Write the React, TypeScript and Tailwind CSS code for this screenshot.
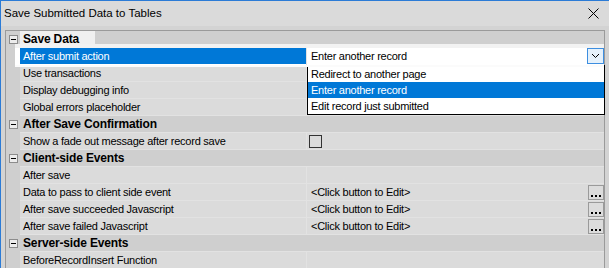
import React from 'react'

type Row =
  | { kind: 'cat'; label: string; focused?: boolean }
  | { kind: 'prop'; label: string; value?: 'none' | 'edit' | 'check' | 'select'; selected?: boolean }

const rows: Row[] = [
  { kind: 'cat', label: 'Save Data', focused: true },
  { kind: 'prop', label: 'After submit action', value: 'select', selected: true },
  { kind: 'prop', label: 'Use transactions' },
  { kind: 'prop', label: 'Display debugging info' },
  { kind: 'prop', label: 'Global errors placeholder' },
  { kind: 'cat', label: 'After Save Confirmation' },
  { kind: 'prop', label: 'Show a fade out message after record save', value: 'check' },
  { kind: 'cat', label: 'Client-side Events' },
  { kind: 'prop', label: 'After save' },
  { kind: 'prop', label: 'Data to pass to client side event', value: 'edit' },
  { kind: 'prop', label: 'After save succeeded Javascript', value: 'edit' },
  { kind: 'prop', label: 'After save failed Javascript', value: 'edit' },
  { kind: 'cat', label: 'Server-side Events' },
  { kind: 'prop', label: 'BeforeRecordInsert Function' },
]

const options = ['Redirect to another page', 'Enter another record', 'Edit record just submitted']

const MinusBox = () => (
  <div className="w-[9px] h-[9px] border border-[#8c8c8c] bg-[#ececec] flex items-center justify-center">
    <div className="w-[5px] h-px bg-black" />
  </div>
)

const EllipsisButton = () => (
  <div className="mt-px mr-0 w-[16px] h-[15px] border border-[#9a9a9a] bg-[#dcdcdc] flex items-end justify-center gap-[2px] pb-[2px]">
    <div className="w-[2px] h-[2px] bg-black" />
    <div className="w-[2px] h-[2px] bg-black" />
    <div className="w-[2px] h-[2px] bg-black" />
  </div>
)

const CategoryRow = ({ label, focused }: { label: string; focused?: boolean }) => (
  <div className="flex h-[17px] bg-[#cfcfcf]">
    <div className="w-[14px] shrink-0 flex items-center pl-[3px]">
      <MinusBox />
    </div>
    <div className="flex-1 border-b border-[#e2e2e2] flex">
      <span
        className={
          'h-full pl-[3px] flex items-center text-[12px] font-bold tracking-[-0.15px] text-black ' +
          (focused ? 'bg-[#f0f0f0] pr-[16px]' : '')
        }
      >
        {label}
      </span>
    </div>
  </div>
)

const PropRow = ({ label, value, selected }: { label: string; value?: string; selected?: boolean }) => {
  if (selected) {
    return (
      <div className="flex h-[17px] relative z-10">
        <div className="w-[9px] shrink-0 bg-[#cfcfcf]" />
        <div className="flex-1 flex bg-white shadow-[0_-4px_0_#f2f2f2,0_2px_0_#fbfbfb]">
          <div className="w-[5px] shrink-0 bg-white" />
          <div className="w-[286px] shrink-0 bg-[#0078d7] text-white pl-[3px] flex items-center border-b border-white">
            {label}
          </div>
          <div className="flex-1 border-l border-[#e2e2e2] bg-white flex items-start justify-between pl-[4px]">
            <span className="leading-[16px] text-black">Enter another record</span>
            <div className="w-[17px] h-[16px] border border-[#3d8ee0] bg-[#e5f1fb] flex items-center justify-center">
              <svg width="9" height="6" viewBox="0 0 9 6">
                <polyline points="1,1 4.5,4.5 8,1" fill="none" stroke="#000" strokeWidth="1" />
              </svg>
            </div>
          </div>
        </div>
      </div>
    )
  }
  return (
    <div className="flex h-[17px]">
      <div className="w-[14px] shrink-0 bg-[#cfcfcf]" />
      <div className="w-[286px] shrink-0 border-b border-[#e2e2e2] bg-[#dbdbdb] pl-[3px] flex items-center text-black">
        {label}
      </div>
      <div className="flex-1 border-l border-b border-[#e2e2e2] bg-[#dbdbdb] flex items-start justify-between text-black">
        {value === 'edit' && (
          <>
            <span className="pl-[4px] leading-[16px]">&lt;Click button to Edit&gt;</span>
            <EllipsisButton />
          </>
        )}
        {value === 'check' && <div className="ml-[2px] mt-[2px] w-[13px] h-[13px] border border-[#333333]" />}
      </div>
    </div>
  )
}

const App = () => {
  return (
    <div
      className="relative w-[609px] h-[268px] overflow-hidden bg-[#d3d3d3] border-l border-t border-[#2b7bd6] text-[11px] tracking-[-0.25px]"
      style={{ fontFamily: '"Liberation Sans", Arial, sans-serif' }}
    >
      <div className="h-[25px] bg-[#dadada] flex items-center justify-between pl-[3px] pr-[10px]">
        <span className="text-[11.5px] tracking-normal text-black">Save Submitted Data to Tables</span>
        <svg width="11" height="11" viewBox="0 0 11 11">
          <path d="M0.5 0.5 L10.5 10.5 M10.5 0.5 L0.5 10.5" stroke="#000" strokeWidth="1" />
        </svg>
      </div>
      <div className="h-[4px]" />
      <div className="ml-[4px] w-[600px] border-t border-l border-r border-[#9a9a9a]">
        {rows.map((r, i) =>
          r.kind === 'cat' ? (
            <CategoryRow key={i} label={r.label} focused={r.focused} />
          ) : (
            <PropRow key={i} label={r.label} value={r.value} selected={r.selected} />
          )
        )}
      </div>

      <div className="absolute left-[306px] top-[64px] w-[298px] h-[50px] bg-white border border-black">
        {options.map((o) => (
          <div
            key={o}
            className={
              'h-[16px] leading-[16px] pl-[3px] ' +
              (o === 'Enter another record' ? 'bg-[#0078d7] text-white' : 'text-black')
            }
          >
            {o}
          </div>
        ))}
      </div>
    </div>
  )
}

export default App
